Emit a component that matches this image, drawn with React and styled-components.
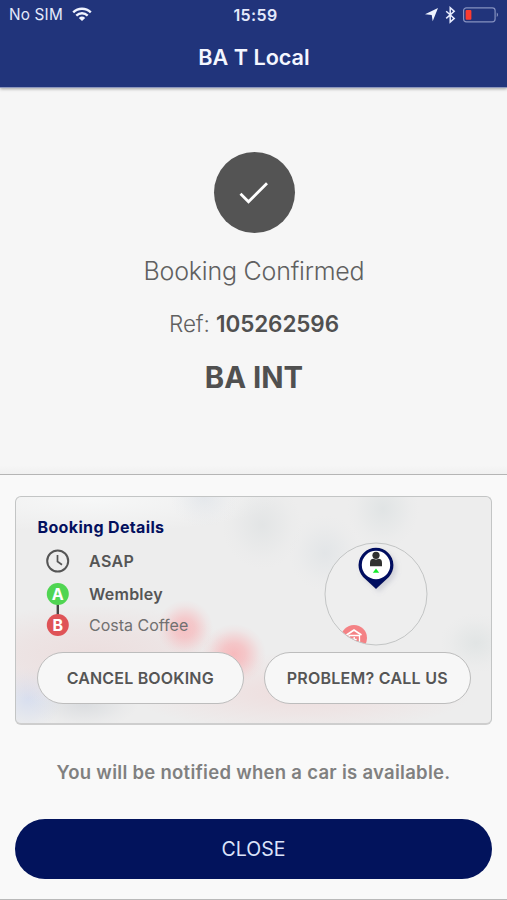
import styled, { createGlobalStyle } from 'styled-components';

const GlobalStyle = createGlobalStyle`
* {
  box-sizing: border-box;
}
body {
  margin: 0;
  background: #f9f9f9;
  font-family: Inter, "Liberation Sans", sans-serif;
  color: #606060;
}
`;

const Screen = styled.div`
height: 900px;
display: flex;
flex-direction: column;
border-bottom: 1px solid #b9b9b9;
overflow: hidden;
`;

const Header = styled.header`
height: 88px;
flex: none;
background: #21347b;
color: #fff;
border-bottom: 1px solid #8d97bd;
box-shadow: 0 1px 3px rgba(0, 0, 0, 0.35);
z-index: 1;
`;

const StatusBar = styled.div`
height: 29px;
padding: 0 8px 0 9px;
display: grid;
grid-template-columns: 1fr auto 1fr;
align-items: center;
color: #e4e9fb;
`;

const StatusGroup = styled.div`
display: flex;
align-items: center;
gap: 9px;
justify-content: ${p => p.end ? 'flex-end' : 'flex-start'};
`;

const Label = styled.span`
white-space: nowrap;
line-height: 20px;
font-size: ${p => p.size}px;
font-weight: ${p => p.weight || 400};
letter-spacing: ${p => p.spacing || 0}px;
padding-left: ${p => p.clock ? 3 : 0}px;
`;

const HeaderTitle = styled.h1`
margin: 0;
height: 58px;
line-height: 57px;
text-align: center;
font-size: 21.6px;
font-weight: 600;
padding-left: 1px;
color: #f4f6ff;
`;

const Hero = styled.section`
height: 387px;
flex: none;
padding: 64px 0 0 1px;
display: flex;
flex-direction: column;
align-items: center;
background: linear-gradient(#f6f6f6 0, #f6f6f6 377px, #f0f0f0 387px);
border-bottom: 1px solid #b5b5b5;
`;

const CheckCircle = styled.div`
width: 81px;
height: 81px;
border-radius: 50%;
background: #545454;
display: flex;
align-items: center;
justify-content: center;
`;

const HeroLine = styled.p`
margin: ${p => p.top}px 0 0;
line-height: 30px;
white-space: nowrap;
font-size: ${p => p.size}px;
font-weight: ${p => p.weight};
letter-spacing: ${p => p.spacing || 0}px;
color: ${p => p.weight > 300 ? '#505050' : '#606060'};

strong {
  font-weight: 600;
  color: #505050;
}
`;

const Details = styled.section`
flex: 1;
padding: 21px 15px 0;
display: flex;
flex-direction: column;
`;

/* washed-out map behind the booking */
const Card = styled.div`
height: 229px;
flex: none;
padding: 19px 20.5px 0 21px;
border: 1px solid #c3c5c5;
border-bottom: 2px solid #cecece;
border-radius: 6px;
background:
  radial-gradient(28px 28px at 169px 131px, rgba(255, 150, 155, 0.5), rgba(255, 150, 155, 0.4) 35%, rgba(255, 150, 155, 0.08) 80%, transparent),
  radial-gradient(32px 30px at 218px 157px, rgba(255, 145, 150, 0.55), rgba(255, 145, 150, 0.42) 35%, rgba(255, 145, 150, 0.08) 80%, transparent),
  radial-gradient(150px 50px at 75px 158px, rgba(235, 200, 200, 0.4), rgba(235, 200, 200, 0.25) 50%, rgba(235, 200, 200, 0)),
  radial-gradient(34px 32px at 12px 202px, rgba(195, 208, 240, 0.5), rgba(195, 208, 240, 0.1) 75%, transparent),
  radial-gradient(55px 26px at 68px 206px, rgba(205, 209, 214, 0.6), rgba(205, 209, 214, 0.1) 75%, transparent),
  radial-gradient(170px 40px at 285px 196px, rgba(240, 205, 205, 0.5), rgba(240, 205, 205, 0.15) 70%, rgba(240, 205, 205, 0)),
  radial-gradient(34px 30px at 188px 0, rgba(220, 225, 231, 0.6), rgba(220, 225, 231, 0.1) 75%, transparent),
  radial-gradient(40px 44px at 246px 28px, rgba(222, 225, 226, 0.7), rgba(222, 225, 226, 0.1) 75%, transparent),
  radial-gradient(36px 40px at 367px 12px, rgba(219, 224, 225, 0.7), rgba(219, 224, 225, 0.1) 75%, transparent),
  radial-gradient(36px 38px at 309px 56px, rgba(222, 226, 229, 0.7), rgba(222, 226, 229, 0.1) 75%, transparent),
  radial-gradient(36px 30px at 460px 146px, rgba(220, 225, 225, 0.7), rgba(220, 225, 225, 0.1) 75%, transparent),
  radial-gradient(190px 34px at 75px 2px, rgba(249, 250, 250, 0.8), rgba(249, 250, 250, 0)),
  #ededed;
`;

const Summary = styled.div`
height: 136px;
display: flex;
justify-content: space-between;
`;

const CardTitle = styled.h2`
margin: 0;
padding-left: 0.5px;
height: 22px;
line-height: 22px;
white-space: nowrap;
font-size: 16px;
font-weight: 700;
letter-spacing: 0.35px;
color: #03105e;
`;

const Trip = styled.div`
display: grid;
grid-template-columns: 41px auto;
grid-template-rows: 35px 31px 31px;
column-gap: 11px;
align-items: center;
margin-top: 5px;
`;

const TripIcons = styled.div`
grid-row: ${p => p.rows};
height: 100%;
display: flex;
align-items: center;
justify-content: center;
`;

const Place = styled.span`
white-space: nowrap;
font-size: 16px;
line-height: 22px;
font-weight: ${p => p.light ? 400 : 600};
letter-spacing: ${p => p.spacing || 0}px;
color: ${p => p.light ? '#707070' : '#555'};
`;

const MiniMap = styled.svg`
flex: none;
margin: 26px 43px 0 0;
`;

const Actions = styled.div`
display: flex;
justify-content: space-between;
`;

const PillButton = styled.button`
width: 206.5px;
height: 52px;
padding: 0;
border: 1px solid #bdbdbd;
border-radius: 26px;
background: #f7f7f7;
font-family: inherit;
font-size: 16px;
font-weight: 600;
letter-spacing: ${p => p.spacing}px;
white-space: nowrap;
color: #555;
`;

const Notice = styled.p`
margin: 0;
height: 94px;
line-height: 94px;
text-align: center;
white-space: nowrap;
font-size: 18.5px;
font-weight: 600;
letter-spacing: 0.28px;
color: #808080;
`;

const CloseButton = styled.button`
height: 60px;
flex: none;
padding: 0;
border: 0;
border-radius: 30px;
background: #02135c;
font-family: inherit;
font-size: 19.5px;
color: #dce3fa;
`;

const WifiIcon = () => (
  <svg width="20" height="15" viewBox="0 0 20 15" fill="none" stroke="#f0f4ff" strokeWidth="2.4">
    <path d="M1.2 5.3C6.2.5 13.8.5 18.8 5.3" />
    <path d="M4.3 8.6C7.6 5.5 12.4 5.5 15.7 8.6" />
    <path d="M10 14 6.8 10.9Q10 8.3 13.2 10.9Z" fill="#f0f4ff" stroke="none" />
  </svg>
);

const StatusIcons = () => (
  <svg width="74" height="18" viewBox="0 0 74 18" fill="none">
    <path d="M0 8.2 13 2 7.7 15.2 6.7 9Z" fill="#f0f4ff" />
    <path d="m21.2 5.3 8 7.1-4 3.6V1.7l4 3.5-8 7.2" stroke="#e8edff" strokeWidth="1.5" />
    <rect x="38.6" y="1.8" width="31.5" height="14" rx="2.8" stroke="#8591c0" strokeWidth="1.2" />
    <rect x="40.6" y="3.9" width="5.8" height="9.8" rx="1" fill="#fb3b30" />
    <path d="M71.8 6.5q2 2.2 0 4.6Z" fill="#a4aed2" />
  </svg>
);

const ClockIcon = () => (
  <svg width="24" height="24" viewBox="0 0 24 24" fill="none" stroke="#555" strokeWidth="2">
    <circle cx="11.7" cy="12" r="10.5" />
    <path d="M11.5 6v6.5l4.5 3.2" strokeWidth="1.7" />
  </svg>
);

const RouteIcon = () => (
  <svg width="24" height="54" viewBox="0 0 24 54">
    <path d="M11.8 18v18" stroke="#444" strokeWidth="2.4" />
    <circle cx="11.8" cy="12" r="11" fill="#50d552" />
    <circle cx="11.8" cy="43" r="11" fill="#df5357" />
    <g fill="#fff" fontFamily="Inter" fontSize="16" fontWeight="700" textAnchor="middle">
      <text x="11.8" y="17.8">A</text>
      <text x="11.8" y="48.8">B</text>
    </g>
  </svg>
);

const PickupMap = () => (
  <MiniMap width="104" height="104" viewBox="0 0 104 104">
    <defs>
      <clipPath id="round">
        <circle cx="52" cy="52" r="51" />
      </clipPath>
      <filter id="pinShadow" x="-30%" y="-30%" width="180%" height="160%">
        <feDropShadow dx="3" dy="3" stdDeviation="2.5" floodColor="#8a90a8" floodOpacity="0.3" />
      </filter>
    </defs>
    <circle cx="52" cy="52" r="51" fill="#eee" />
    <g clipPath="url(#round)">
      <circle cx="30" cy="96" r="13" fill="#f48285" />
      <path d="m22.5 93 7.5-5 7.5 5" fill="none" stroke="#fff" strokeWidth="1.7" />
      <path d="M25 93.5h10.5V103H25Z" fill="#f48285" stroke="#fff" strokeWidth="1.3" />
      <path d="M30.2 95v5M27.7 97.5h5" stroke="#fff" strokeWidth="1.3" />
    </g>
    <circle cx="52" cy="52" r="51" fill="none" stroke="#c3c5c5" />
    <path d="M52 47 39 35A17.5 17.5 0 1 1 65 35Z" fill="#021160" filter="url(#pinShadow)" />
    <circle cx="52" cy="23" r="14.2" fill="#fff" />
    <circle cx="52" cy="13.3" r="3.6" fill="#303030" />
    <path d="M46 24.3V21q0-4.2 3.5-4.2 2.5 1.2 5 0 3.5 0 3.5 4.2v3.3Z" fill="#303030" />
    <path d="m48.8 30.8 3.2-4.2 3.2 4.2Z" fill="#16ec2b" />
  </MiniMap>
);

export default function App() {
  return (
    <Screen>
      <GlobalStyle />
      <Header>
        <StatusBar>
          <StatusGroup>
            <Label size={15.3} spacing={0.2}>No SIM</Label>
            <WifiIcon />
          </StatusGroup>
          <Label clock size={16} weight={600} spacing={0.4}>15:59</Label>
          <StatusGroup end>
            <StatusIcons />
          </StatusGroup>
        </StatusBar>
        <HeaderTitle>BA T Local</HeaderTitle>
      </Header>
      <Hero>
        <CheckCircle>
          <svg width="32" height="26" viewBox="0 0 32 26" fill="none" stroke="#fff" strokeWidth="2.8">
            <path d="m2.5 13.7 8 8L29 3.2" />
          </svg>
        </CheckCircle>
        <HeroLine top={23} size={25} weight={300} spacing={-0.22}>Booking Confirmed</HeroLine>
        <HeroLine top={23} size={22.5} weight={300} spacing={-0.1}>Ref: <strong>105262596</strong></HeroLine>
        <HeroLine top={24} size={29.3} weight={700}>BA INT</HeroLine>
      </Hero>
      <Details>
        <Card>
          <Summary>
            <div>
              <CardTitle>Booking Details</CardTitle>
              <Trip>
                <TripIcons rows="1"><ClockIcon /></TripIcons>
                <Place spacing={0.4}>ASAP</Place>
                <TripIcons rows="2 / 4"><RouteIcon /></TripIcons>
                <Place spacing={0.25}>Wembley</Place>
                <Place light>Costa Coffee</Place>
              </Trip>
            </div>
            <PickupMap />
          </Summary>
          <Actions>
            <PillButton spacing={0.18}>CANCEL BOOKING</PillButton>
            <PillButton spacing={0.25}>PROBLEM? CALL US</PillButton>
          </Actions>
        </Card>
        <Notice>You will be notified when a car is available.</Notice>
        <CloseButton>CLOSE</CloseButton>
      </Details>
    </Screen>
  );
}
